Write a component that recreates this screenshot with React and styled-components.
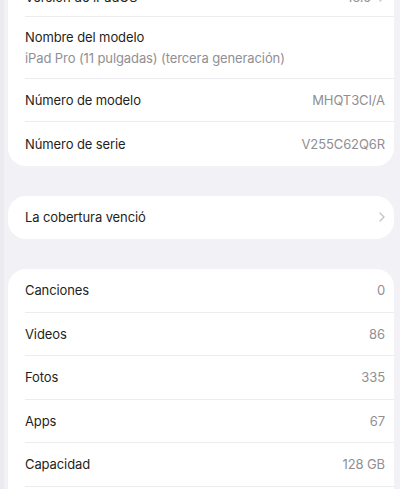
import React from "react";
import styled, { createGlobalStyle } from "styled-components";

const GlobalStyle = createGlobalStyle`
  html, body {
    margin: 0;
    padding: 0;
    height: 489px;
    overflow: hidden;
    background: #f2f2f6;
  }
  * {
    box-sizing: border-box;
  }
`;

const aboutRows = [
  { label: "Versión de iPadOS", value: "16.5", chevron: true },
  { label: "Nombre del modelo", sub: "iPad Pro (11 pulgadas) (tercera generación)" },
  { label: "Número de modelo", value: "MHQT3CI/A" },
  { label: "Número de serie", value: "V255C62Q6R" },
];

const countRows = [
  { label: "Canciones", value: "0" },
  { label: "Videos", value: "86" },
  { label: "Fotos", value: "335" },
  { label: "Apps", value: "67" },
  { label: "Capacidad", value: "128 GB" },
  { label: "Disponible", value: "57,3 GB" },
];

const Chevron = () => (
  <ChevronIcon viewBox="0 0 6 10" width="6" height="10">
    <path d="M1 1l4 4-4 4" fill="none" stroke="#c5c5c9" strokeWidth="1.4" strokeLinecap="round" strokeLinejoin="round" />
  </ChevronIcon>
);

const SettingRow = ({ label, value, sub, chevron, first }) => (
  <Row $tall={!!sub} $first={first}>
    <LabelBlock>
      <Label>{label}</Label>
      {sub && <Sub>{sub}</Sub>}
    </LabelBlock>
    {(value || chevron) && (
      <ValueBlock>
        {value && <Value>{value}</Value>}
        {chevron && <Chevron />}
      </ValueBlock>
    )}
  </Row>
);

const App = () => {
  return (
    <>
      <GlobalStyle />
      <Page>
        <Card>
          {aboutRows.map((r, i) => (
            <SettingRow key={r.label} first={i === 0} {...r} />
          ))}
        </Card>
        <Card>
          <SettingRow label="La cobertura venció" chevron />
        </Card>
        <Card>
          {countRows.map((r) => (
            <SettingRow key={r.label} {...r} />
          ))}
        </Card>
      </Page>
    </>
  );
};

const Page = styled.div`
  display: flex;
  flex-direction: column;
  gap: 30px;
  margin-top: -27px;
  padding: 0 6px 0 4px;
  border-left: 4px solid #ebebef;
  font-family: Inter, "Noto Sans", "Liberation Sans", sans-serif;
  -webkit-font-smoothing: antialiased;
`;

const Card = styled.div`
  background: #ffffff;
  border-radius: 18px;
  overflow: hidden;
`;

const Row = styled.div`
  display: flex;
  align-items: ${({ $first }) => ($first ? "flex-end" : "center")};
  justify-content: space-between;
  min-height: ${({ $tall }) => ($tall ? "62px" : "43.5px")};
  padding-bottom: ${({ $first }) => ($first ? "11px" : "0")};
  margin-left: 17px;
  padding-right: 9px;
  border-bottom: 1px solid #ececef;

  &:last-child {
    border-bottom: none;
  }
`;

const LabelBlock = styled.div`
  display: flex;
  flex-direction: column;
  gap: 5px;
`;

const Label = styled.span`
  font-size: 13px;
  color: #1f1f21;
  letter-spacing: -0.1px;
`;

const Sub = styled.span`
  font-size: 13px;
  color: #8f8f94;
  letter-spacing: -0.1px;
`;

const ValueBlock = styled.div`
  display: flex;
  align-items: center;
  gap: 8px;
`;

const Value = styled.span`
  font-size: 13px;
  color: #8f8f94;
  letter-spacing: -0.1px;
`;

const ChevronIcon = styled.svg`
  display: block;
`;

export default App;
